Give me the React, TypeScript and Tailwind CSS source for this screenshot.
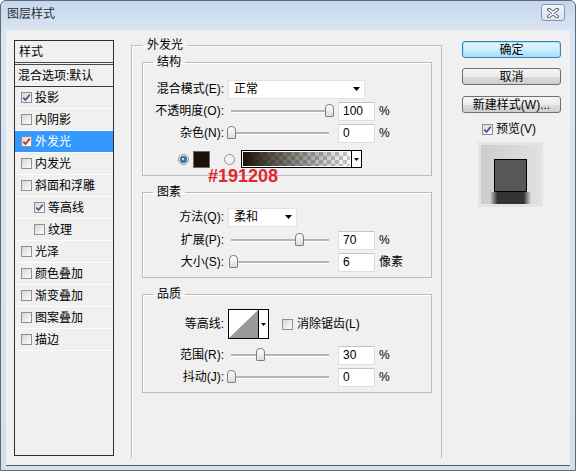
import type { ReactNode } from "react";

const items = [
  { label: "投影", checked: true },
  { label: "内阴影" },
  { label: "外发光", checked: true, selected: true },
  { label: "内发光" },
  { label: "斜面和浮雕" },
  { label: "等高线", checked: true, sub: true },
  { label: "纹理", sub: true },
  { label: "光泽" },
  { label: "颜色叠加" },
  { label: "渐变叠加" },
  { label: "图案叠加" },
  { label: "描边" },
];

function Check({ checked, selected }: { checked?: boolean; selected?: boolean }) {
  return (
    <span className="flex h-[11px] w-[11px] shrink-0 items-center justify-center border border-[#8e8f8f] bg-[linear-gradient(135deg,#d6d6d6,#fdfdfd)]">
      {checked && (
        <svg width="9" height="9" viewBox="0 0 9 9">
          <path
            d="M1.3 4.6 L3.5 7 L7.8 1.6"
            fill="none"
            stroke={selected ? "#b0303c" : "#3d5a96"}
            strokeWidth="1.7"
          />
        </svg>
      )}
    </span>
  );
}

function Radio({ on }: { on?: boolean }) {
  return (
    <svg width="11" height="11" viewBox="0 0 11 11" className="shrink-0">
      <circle cx="5.5" cy="5.5" r="5" fill="#f3f3f3" stroke="#8c8c8c" />
      {on && (
        <>
          <circle cx="5.5" cy="5.5" r="3.2" fill="#3a7cc0" stroke="#1d4877" strokeWidth="0.8" />
          <circle cx="5" cy="5" r="1.2" fill="#bfe0ff" />
        </>
      )}
    </svg>
  );
}

function Arrow() {
  return (
    <svg width="7" height="4" viewBox="0 0 7 4">
      <path d="M0 0 H7 L3.5 4 Z" fill="#000" />
    </svg>
  );
}

function Label({ children }: { children: ReactNode }) {
  return <span className="w-[81px] shrink-0 whitespace-nowrap text-right">{children}</span>;
}

function Select({ value, width }: { value: string; width: string }) {
  return (
    <div className={`ml-[4px] flex h-[19px] items-center justify-between border border-[#e2e2e2] bg-white pl-[5px] pr-[4px] ${width}`}>
      <span>{value}</span>
      <Arrow />
    </div>
  );
}

function Slider({ pct }: { pct: number }) {
  return (
    <div className="relative ml-[2px] flex h-[22px] w-[108px] shrink-0 items-center px-[5px]">
      <div className="h-[2px] flex-1 bg-[#b4b4b4] shadow-[0_1px_0_#ffffff]" />
      <div
        className="absolute top-[4px] h-[13px] w-[9px] rounded-t-[4px] rounded-b-[1px] border border-[#7f7f7f] bg-[linear-gradient(#ffffff,#dcdcdc)]"
        style={{ left: `${5 + pct * 98 - 4.5}px` }}
      />
    </div>
  );
}

function NumBox({ value }: { value: string }) {
  return (
    <div className="ml-[4px] h-[19px] w-[37px] shrink-0 border border-[#dedede] border-t-[#c4c4c4] bg-white pl-[4px] leading-[17px]">
      {value}
    </div>
  );
}

function SliderRow({ label, pct, value, unit }: { label: string; pct: number; value: string; unit: string }) {
  return (
    <div className="flex h-[22px] items-center">
      <Label>{label}</Label>
      <Slider pct={pct} />
      <NumBox value={value} />
      <span className="ml-[4px]">{unit}</span>
    </div>
  );
}

function Group({ title, className, children }: { title: string; className?: string; children: ReactNode }) {
  return (
    <fieldset className={`ml-[10px] w-[290px] border border-[#bcbcbc] shadow-[inset_1px_1px_0_#ffffff] ${className ?? ""}`}>
      <legend className="ml-[10px] px-[4px] leading-[14px]">{title}</legend>
      {children}
    </fieldset>
  );
}

function Button({ children, primary }: { children: ReactNode; primary?: boolean }) {
  return (
    <div
      className={`flex h-[17px] w-[99px] items-center justify-center rounded-[3px] border leading-none ${
        primary
          ? "border-[#3c7fb1] bg-[linear-gradient(#eaf7fd,#cdeefc_50%,#a9dcf6)] shadow-[inset_0_0_0_1px_#9fe3fd]"
          : "border-[#707070] bg-[linear-gradient(#f4f4f4,#ececec_50%,#dcdcdc_50%,#cfcfcf)]"
      }`}
    >
      {children}
    </div>
  );
}

export default function App() {
  return (
    <div className="flex h-[471px] w-[576px] flex-col overflow-hidden rounded-t-[6px] border border-[#5d6b7e] bg-[linear-gradient(#c6d7ed,#dae5f3_30px,#d4dfee)] font-['Liberation_Sans','Noto_Sans_CJK_SC',sans-serif] text-[12px] text-black">
      {/* title bar */}
      <div className="flex h-[29px] shrink-0 items-start justify-between pl-[6px] pr-[10px]">
        <span className="mt-[5px] text-[12px] leading-[16px] text-[#2a2f38]">图层样式</span>
        <div className="mt-[3px] flex h-[17px] w-[24px] items-center justify-center rounded-[3px] border border-[#8a97a8] bg-[linear-gradient(#f1f5fa,#d8e2ee)]">
          <svg width="12" height="10" viewBox="0 0 12 10">
            <path d="M2 1.5 L10 8.5 M10 1.5 L2 8.5" stroke="#3a4b62" strokeWidth="3.6" strokeLinecap="round" />
            <path d="M2 1.5 L10 8.5 M10 1.5 L2 8.5" stroke="#ffffff" strokeWidth="1.8" strokeLinecap="round" />
          </svg>
        </div>
      </div>

      {/* body */}
      <div className="mx-[5px] mb-[4px] flex flex-1 border-b border-[#5a5a5a] bg-[#f0f0f0] pl-[8px] pt-[10px]">
        {/* style list */}
        <div className="h-[416px] w-[100px] shrink-0 border border-[#2e2e2e]">
          <div className="flex h-[24px] items-center border-b-[3px] border-double border-[#4a4a4a] pl-[4px]">样式</div>
          <div className="flex h-[22px] items-center border-b border-[#3a3a3a] pl-[3px]">混合选项:默认</div>
          {items.map((it) => (
            <div
              key={it.label}
              className={`flex h-[22px] items-center gap-[3px] border-b border-[#fcfcfc] ${it.sub ? "pl-[19px]" : "pl-[6px]"} ${
                it.selected ? "bg-[#3399ff] text-white" : ""
              }`}
            >
              <Check checked={it.checked} selected={it.selected} />
              <span>{it.label}</span>
            </div>
          ))}
        </div>

        {/* settings */}
        <fieldset className="-mt-[2px] ml-[17px] h-[420px] w-[311px] shrink-0 border border-b-0 border-[#bcbcbc] shadow-[inset_1px_1px_0_#ffffff]">
          <legend className="ml-[11px] px-[4px] leading-[14px]">外发光</legend>

          <Group title="结构" className="mt-[3px] pb-[7px]">
            <div className="mt-[10px] flex h-[20px] items-center">
              <Label>混合模式(E):</Label>
              <Select value="正常" width="w-[137px]" />
            </div>
            <div className="mt-[1px]">
              <SliderRow label="不透明度(O):" pct={1} value="100" unit="%" />
              <SliderRow label="杂色(N):" pct={0} value="0" unit="%" />
            </div>
            <div className="relative mt-[6px] flex h-[18px] items-center pl-[35px]">
              <Radio on />
              <div className="ml-[4px] h-[17px] w-[17px] border border-[#6a6a6a] bg-[#191208]" />
              <div className="ml-[14px]">
                <Radio />
              </div>
              <div className="ml-[6px] flex h-[18px] w-[121px] border border-black">
                <div className="flex-1 border border-white bg-[linear-gradient(to_right,#191208,rgba(25,18,8,0)),conic-gradient(#c8c8c8_25%,#ffffff_0_50%,#c8c8c8_0_75%,#ffffff_0)] bg-[length:100%_100%,8px_8px]" />
                <div className="flex w-[10px] items-center justify-center border-l border-black bg-white">
                  <svg width="5" height="3" viewBox="0 0 5 3">
                    <path d="M0 0 H5 L2.5 3 Z" fill="#000" />
                  </svg>
                </div>
              </div>
              <span className="absolute left-[65px] top-[16px] text-[18px] font-bold leading-[20px] text-[#e3262c]">#191208</span>
            </div>
          </Group>

          <Group title="图素" className="mt-[9px] pb-[4px]">
            <div className="mt-[8px] flex h-[20px] items-center">
              <Label>方法(Q):</Label>
              <Select value="柔和" width="w-[69px]" />
            </div>
            <div className="mt-[2px]">
              <SliderRow label="扩展(P):" pct={0.7} value="70" unit="%" />
              <SliderRow label="大小(S):" pct={0.03} value="6" unit="像素" />
            </div>
          </Group>

          <Group title="品质" className="mt-[9px] pb-[4px]">
            <div className="mt-[8px] flex h-[30px] items-center">
              <Label>等高线:</Label>
              <div className="ml-[4px] flex h-[30px] w-[41px] border border-black bg-white">
                <svg width="29" height="28" viewBox="0 0 29 28" className="shrink-0">
                  <path d="M0 28 L29 0 L29 28 Z" fill="#9a9a9a" />
                </svg>
                <div className="flex flex-1 items-center justify-center border-l border-black">
                  <svg width="5" height="3" viewBox="0 0 5 3">
                    <path d="M0 0 H5 L2.5 3 Z" fill="#000" />
                  </svg>
                </div>
              </div>
              <div className="ml-[13px]">
                <Check />
              </div>
              <span className="ml-[4px]">消除锯齿(L)</span>
            </div>
            <div className="mt-[5px]">
              <SliderRow label="范围(R):" pct={0.3} value="30" unit="%" />
              <SliderRow label="抖动(J):" pct={0} value="0" unit="%" />
            </div>
          </Group>
        </fieldset>

        {/* buttons */}
        <div className="ml-[20px] mt-[1px] flex w-[99px] shrink-0 flex-col">
          <Button primary>确定</Button>
          <div className="mt-[10px]">
            <Button>取消</Button>
          </div>
          <div className="mt-[11px]">
            <Button>新建样式(W)...</Button>
          </div>
          <div className="mt-[8px] flex h-[16px] items-center gap-[3px] pl-[20px]">
            <Check checked />
            <span>预览(V)</span>
          </div>
          <div className="ml-[16px] mt-[5px] flex h-[65px] w-[65px] flex-col items-center border-[3px] border-[#e4e4e4] bg-[linear-gradient(to_right,#cdcdcd,#e0e0e0)] pt-[14px]">
            <div className="h-[33px] w-[33px] shrink-0 border border-black bg-[#575757]" />
            <div className="w-[41px] flex-1 bg-[linear-gradient(to_right,rgba(60,60,60,0),#333333_18%,#333333_82%,rgba(60,60,60,0))]" />
          </div>
        </div>
      </div>
    </div>
  );
}
